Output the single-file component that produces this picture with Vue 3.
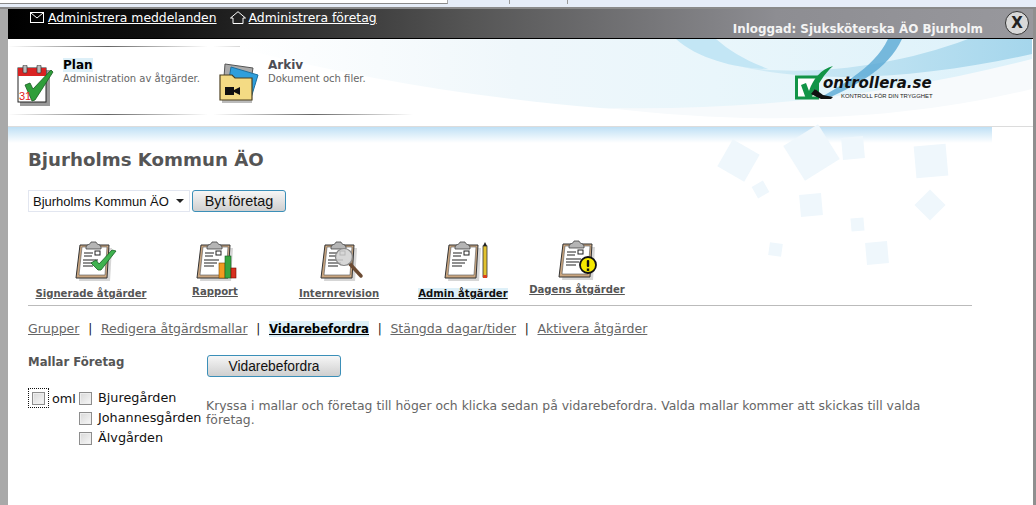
<template>
  <div class="chrome">
    <div class="chrometab"></div>
    <i class="tick first"></i>
    <i class="tick"></i>
  </div>
  <div class="window">
    <div class="topbar">
      <div class="toplinks">
        <svg class="ico" viewBox="0 0 14 11" width="14" height="11"><rect x="0.5" y="0.5" width="13" height="10" fill="none" stroke="#fff"/><path d="M1 1l6 5 6-5" fill="none" stroke="#fff"/></svg>
        <a class="toplink">Administrera meddelanden</a>
        <svg class="ico house" viewBox="0 0 16 13" width="16" height="13"><path d="M0.5 7L8 0.7 15.5 7H13v5.500H3V7z" fill="none" stroke="#fff"/></svg>
        <a class="toplink">Administrera företag</a>
      </div>
      <div class="logged">Inloggad: Sjuksköterska ÄO Bjurholm</div>
      <div class="close">X</div>
    </div>

    <header class="head">
      <svg class="swoosh" viewBox="0 0 1024 87" width="1024" height="87">
        <defs>
          <linearGradient id="sky" x1="232" x2="1024" y1="0" y2="0" gradientUnits="userSpaceOnUse">
            <stop offset="0" stop-color="#fff"/>
            <stop offset="0.35" stop-color="#eff7fb"/>
            <stop offset="0.6" stop-color="#e9f6fb"/>
            <stop offset="1" stop-color="#dcf1fa"/>
          </linearGradient>
          <linearGradient id="band" x1="700" x2="1024" y1="0" y2="0" gradientUnits="userSpaceOnUse">
            <stop offset="0" stop-color="#d9eff8"/>
            <stop offset="1" stop-color="#a5d6ec"/>
          </linearGradient>
        </defs>
        <path d="M232 9C330 35 460 58 592 69 700 76 860 62 1024 38V0H232z" fill="url(#sky)"/>
        <path d="M730 27C790 38 880 30 960 0H1024V15C930 36 820 48 730 27z" fill="url(#band)"/>
        <path d="M668 0H708C722 12 735 20 760 30 730 30 690 20 668 0z" fill="#c3e6f5"/>
        <path d="M880 0h14C880 30 850 48 790 72 830 48 866 30 880 0z" fill="#5aa9d4" opacity=".8"/>
        <path d="M600 69C760 72 900 52 1024 20V50C900 80 760 88 600 69z" fill="#f7fafc"/>
      </svg>
      <div class="headitem">
        <svg class="headicon" viewBox="0 0 38 42" width="38" height="42">
          <rect x="3" y="5" width="30" height="36" fill="#999"/>
          <rect x="1" y="3" width="28" height="34" fill="#fff" stroke="#222"/>
          <rect x="1" y="3" width="28" height="8" fill="#d92323"/>
          <rect x="6" y="0" width="4" height="8" rx="1" fill="#bbb" stroke="#333" stroke-width=".7"/>
          <rect x="20" y="0" width="4" height="8" rx="1" fill="#bbb" stroke="#333" stroke-width=".7"/>
          <path d="M8 20l5-2 3 6L34 5l2 2-18 28-3 1z" fill="#2f9e3a" stroke="#17591f" stroke-width=".8"/>
          <text x="2" y="35" class="calnum">31</text>
        </svg>
        <div class="headtext">
          <div class="headtitle current"><span>Plan</span></div>
          <div class="headsub">Administration av åtgärder.</div>
        </div>
      </div>
      <div class="headitem second">
        <svg class="headicon" viewBox="0 0 40 42" width="40" height="42">
          <path d="M6 2L34 6 30 30 4 28z" fill="#aaa" stroke="#555"/>
          <path d="M12 5L39 13 32 36 8 30z" fill="#2f9fdc" stroke="#1c6f9f"/>
          <path d="M3 41h30v-4H3z" fill="#bbb"/>
          <path d="M1 13h12l3 3h17v22H1z" fill="#f4db84" stroke="#4c4020" stroke-width="1.200"/>
          <rect x="6" y="25" width="9" height="8" fill="#111"/>
          <path d="M15 28l6-3v8l-6-3z" fill="#111"/>
        </svg>
        <div class="headtext">
          <div class="headtitle"><span>Arkiv</span></div>
          <div class="headsub">Dokument och filer.</div>
        </div>
      </div>
      <div class="brand">
        <svg class="brandmark" viewBox="0 0 40 36" width="40" height="36">
          <rect x="1.500" y="12" width="21" height="21" fill="#fff" stroke="#119447" stroke-width="3"/>
          <path d="M6 20l5-2 3 8C18 14 26 4 38 1 30 8 22 20 16 34h-5z" fill="#119447"/>
          <path d="M20 24l8 6 10 2-2 2H26l-10-5z" fill="#111"/>
        </svg>
        <div class="brandtext">
          <div class="brandname">ontrollera.se</div>
          <div class="brandsub">KONTROLL FÖR DIN TRYGGHET</div>
        </div>
      </div>
    </header>

    <main class="content">
      <div class="squares">
        <i v-for="(s, i) in squares" :key="i" class="square" :style="{ left: s[0] + 'px', top: s[1] + 'px', width: s[2] + 'px', height: s[2] + 'px', transform: 'rotate(' + s[3] + 'deg)' }"></i>
      </div>

      <h1 class="title">Bjurholms Kommun ÄO</h1>

      <div class="switch">
        <div class="select"><span>Bjurholms Kommun ÄO</span><b class="caret"></b></div>
        <button class="btn byt">Byt företag</button>
      </div>

      <nav class="tools">
        <a v-for="t in tools" :key="t.label" class="tool" :class="t.cls">
          <svg class="clip" viewBox="0 0 52 44" width="52" height="44">
            <path d="M8 8H37L35 41H4z" fill="#bbb" opacity=".6" transform="translate(3 1)"/>
            <path d="M8 6H37L35 39H4z" fill="#c9a57f" stroke="#333"/>
            <path d="M10 8H35L33 36H7z" fill="#fff" stroke="#555" stroke-width=".6"/>
            <path d="M14 8c0-3 5-2 5-5h5c0 3 5 2 5 5v2H14z" fill="#b5b5b5" stroke="#444" stroke-width=".8"/>
            <path d="M12 14h9M12 17h8M11 21h15M11 24h13M11 27h10" stroke="#222" stroke-width="1.100"/>
            <rect x="23" y="12" width="5" height="4" fill="none" stroke="#222"/>
            <path v-if="t.mark === 'check'" d="M19 24l5-3 3 4L40 11l4 1-15 19h-3z" fill="#3fb24f" stroke="#155f22" stroke-width=".8"/>
            <g v-if="t.mark === 'chart'">
              <rect x="26" y="24" width="6" height="15" fill="#f29a1f" stroke="#7a4a00" stroke-width=".6"/>
              <rect x="32" y="17" width="6" height="22" fill="#37a53f" stroke="#155f22" stroke-width=".6"/>
              <rect x="38" y="29" width="5" height="10" fill="#d8301f" stroke="#701000" stroke-width=".6"/>
            </g>
            <g v-if="t.mark === 'lens'">
              <path d="M33 25l11 12" stroke="#6b4a32" stroke-width="3.500" stroke-linecap="round"/>
              <circle cx="27" cy="18" r="8.500" fill="#d0d0d0" fill-opacity=".85" stroke="#888" stroke-width="1.200"/>
            </g>
            <g v-if="t.mark === 'pencil'">
              <rect x="42" y="7" width="4" height="31" fill="#e2c22f" stroke="#333" stroke-width=".8"/>
              <path d="M42 7l2-4 2 4z" fill="#222"/>
              <rect x="42" y="36" width="4" height="3" fill="#d8401f"/>
            </g>
            <g v-if="t.mark === 'warn'">
              <circle cx="33" cy="27" r="8" fill="#f5e900" stroke="#111" stroke-width="1.800"/>
              <rect x="31.800" y="22" width="2.400" height="7" rx="1" fill="#111"/>
              <rect x="31.800" y="30.500" width="2.400" height="2.400" fill="#111"/>
            </g>
          </svg>
          <span class="toollabel">{{ t.label }}</span>
        </a>
      </nav>

      <div class="tabs">
        <template v-for="(tab, i) in tabs" :key="tab">
          <span v-if="i" class="sep">|</span>
          <a class="tab" :class="{ active: tab === 'Vidarebefordra' }">{{ tab }}</a>
        </template>
      </div>

      <div class="formhead">
        <div class="formtitle">Mallar Företag</div>
        <button class="btn send">Vidarebefordra</button>
      </div>

      <div class="formbody">
        <div class="templates">
          <span class="focus"><i class="box"></i></span>
          <span class="oml">oml</span>
        </div>
        <ul class="companies">
          <li v-for="c in companies" :key="c"><i class="box"></i>{{ c }}</li>
        </ul>
        <p class="help">Kryssa i mallar och företag till höger och klicka sedan på vidarebefordra. Valda mallar kommer att skickas till valda företag.</p>
      </div>
    </main>
  </div>
</template>

<script setup>
const tools = [
  { label: 'Signerade åtgärder', mark: 'check', cls: 'signed' },
  { label: 'Rapport', mark: 'chart', cls: 'report' },
  { label: 'Internrevision', mark: 'lens', cls: 'audit' },
  { label: 'Admin åtgärder', mark: 'pencil', cls: 'admin' },
  { label: 'Dagens åtgärder', mark: 'warn', cls: 'today' }
]

const tabs = ['Grupper', 'Redigera åtgärdsmallar', 'Vidarebefordra', 'Stängda dagar/tider', 'Aktivera åtgärder']

const companies = ['Bjuregården', 'Johannesgården', 'Älvgården']

// left, top, size, rotation, relative to the content area
const squares = [
  [714.5, 17.5, 31, 30], [783, 5, 41, -32], [834, 10, 22, -5], [907, 18, 32, -5],
  [745.5, 55.5, 13, -30], [792, 67, 22, -5], [911, 67, 22, 45], [842.5, 90.5, 13, -5],
  [760.5, 115.5, 13, 8], [858, 115, 22, -5]
]
</script>

<style>
html, body {
  margin: 0;
  background: #fff;
}
</style>

<style scoped>
.chrome {
  display: flex;
  box-sizing: border-box;
  height: 9px;
  background: #e6edf8;
  border-bottom: 2px solid #8a8a8a;
}

.chrometab {
  box-sizing: border-box;
  width: 448px;
  height: 4px;
  background: #fff;
  border-bottom: 1px solid #8a8a8a;
  border-right: 1px solid #aaa;
}

.tick {
  display: block;
  width: 1px;
  height: 4px;
  margin-left: 57px;
  background: #999;
}

.tick.first {
  margin-left: 61px;
}

.window {
  box-sizing: border-box;
  height: 496px;
  overflow: hidden;
  background: #fff;
  border-left: 8px solid #a9a9a9;
  border-right: 3px solid #8f8f8f;
  font-family: "DejaVu Sans", Verdana, sans-serif;
}

.topbar {
  display: flex;
  height: 30px;
  background: linear-gradient(90deg, #000 0, #111 15%, #555 45%, #8d8d92 75%, #98989d 100%);
  border-bottom: 1px solid #000;
  color: #fff;
  box-sizing: border-box;
}

.toplinks {
  display: flex;
  align-items: center;
  height: 16px;
  padding-left: 22px;
}

.ico {
  margin-right: 4px;
}

.house {
  margin-left: 13px;
  margin-right: 3px;
}

.toplink {
  color: #fff;
  font-size: 12.400px;
  text-decoration: underline;
}

.logged {
  margin-left: auto;
  padding-top: 13px;
  font-size: 11.900px;
  font-weight: 700;
  color: #f4f4f4;
}

.close {
  box-sizing: border-box;
  width: 24px;
  height: 24px;
  margin: 2px 4px 0 22px;
  border: 1px solid #333;
  border-radius: 50%;
  background: #d8d8d8;
  color: #222;
  font-size: 15px;
  font-weight: 700;
  line-height: 22px;
  text-align: center;
}

.head {
  position: relative;
  display: flex;
  height: 88px;
  border-bottom: 1px solid #dcdcdc;
  overflow: hidden;
  box-sizing: border-box;
  background-image:
    linear-gradient(90deg, transparent, #666 50%, transparent),
    linear-gradient(90deg, transparent, #666 50%, transparent),
    linear-gradient(90deg, transparent, #666 50%, transparent),
    linear-gradient(90deg, transparent, #666 50%, transparent);
  background-size: 200px 1px;
  background-position: 0 7px, 205px 7px, 0 75px, 205px 75px;
  background-repeat: no-repeat;
}

.swoosh {
  position: absolute;
  left: 0;
  top: 0;
}

.headitem {
  position: relative;
  display: flex;
  width: 205px;
  padding: 19px 0 0 9px;
  box-sizing: border-box;
}

.headitem.second {
  padding-left: 6px;
}

.headicon {
  flex: none;
  margin-top: 7px;
}

.second .headicon {
  margin-top: 4px;
}

.calnum {
  font-family: "Liberation Sans", sans-serif;
  font-size: 11px;
  fill: #e02020;
}

.headtext {
  margin-left: 8px;
}

.second .headtext {
  margin-left: 9px;
}

.headtitle {
  font-size: 12px;
  font-weight: 700;
  color: #4d4d55;
  line-height: 15px;
}

.headtitle.current span {
  background: #def0f8;
  color: #000;
}

.headsub {
  font-size: 10px;
  color: #666;
  line-height: 12px;
  white-space: nowrap;
}

.brand {
  position: absolute;
  left: 787px;
  top: 26px;
  display: flex;
}

.brandtext {
  margin-left: -12px;
  padding-top: 9px;
}

.brandname {
  font-size: 15px;
  font-style: italic;
  font-weight: 700;
  line-height: 19px;
  color: #111;
}

.brandsub {
  margin-left: 18px;
  font-family: "Liberation Sans", sans-serif;
  font-size: 5.900px;
  line-height: 7px;
  color: #222;
  white-space: nowrap;
}

.content {
  position: relative;
  padding: 21px 52px 0 20px;
  height: 378px;
  box-sizing: border-box;
  background: linear-gradient(#bfe0f5, #fff 16px) no-repeat 0 0 / 984px 16px;
}

.squares {
  position: absolute;
  left: 0;
  top: 0;
}

.square {
  position: absolute;
  display: block;
  background: #eff7fc;
}

.title {
  position: relative;
  margin: 0;
  font-size: 18.200px;
  line-height: 24px;
  font-weight: 700;
  color: #555;
}

.switch {
  position: relative;
  display: flex;
  align-items: center;
  gap: 2px;
  margin-top: 18px;
}

.select {
  box-sizing: border-box;
  display: flex;
  align-items: center;
  justify-content: space-between;
  width: 162px;
  height: 22px;
  padding: 0 4px;
  background: #fff;
  border: 1px solid #e2e6f0;
  font-family: "Liberation Sans", sans-serif;
  font-size: 13px;
  color: #111;
  white-space: nowrap;
}

.caret {
  width: 0;
  height: 0;
  border: 4px solid transparent;
  border-top: 4px solid #222;
  border-bottom: 0;
  margin-right: 1px;
}

.btn {
  box-sizing: border-box;
  border: 1px solid #3b8fb8;
  border-radius: 3px;
  background: linear-gradient(#f6f6f6, #cfcfcf);
  font-family: "Liberation Sans", sans-serif;
  font-size: 13.800px;
  color: #111;
  padding: 0;
}

.byt {
  width: 94px;
  height: 22px;
  font-size: 14.400px;
  word-spacing: -1px;
}

.tools {
  position: relative;
  display: flex;
  align-items: flex-start;
  height: 67px;
  margin-top: 27px;
  border-bottom: 1px solid #bbb;
  width: 944px;
  box-sizing: border-box;
}

.tool {
  display: flex;
  flex-direction: column;
  align-items: center;
}

.clip {
  flex: none;
  margin-left: 8px;
}

.toollabel {
  font-size: 10.100px;
  font-weight: 700;
  color: #555;
  text-decoration: underline;
  white-space: nowrap;
  line-height: 12px;
  margin-top: 5px;
}

.signed { margin-left: 8px; width: 110px; }
.signed .clip { margin-left: 13px; }
.report { margin-left: 46px; width: 46px; }
.report .toollabel { margin-top: 3px; }
.audit { margin-left: 60px; width: 82px; }
.admin { margin-left: 38px; width: 90px; }
.today { margin-left: 21px; width: 96px; margin-top: -1px; }
.today .toollabel { margin-top: 2px; }

.admin .toollabel {
  color: #111;
  background: #def0f8;
}

.tabs {
  position: relative;
  display: flex;
  align-items: center;
  margin-top: 15px;
  font-size: 12.500px;
  line-height: 16px;
  color: #111;
}

.tab {
  color: #666;
  text-decoration: underline;
}

.tab.active {
  color: #000;
  font-size: 11.700px;
  font-weight: 700;
  background: #def0f8;
}

.sep {
  margin: 0 8.700px;
  font-size: 12px;
}

.formhead {
  position: relative;
  display: flex;
  align-items: flex-start;
  margin-top: 18px;
}

.formtitle {
  width: 179px;
  font-size: 11.700px;
  font-weight: 700;
  color: #555;
  line-height: 14px;
}

.send {
  width: 134px;
  height: 22px;
}

.formbody {
  position: relative;
  display: flex;
  align-items: flex-start;
  margin-top: 11px;
  font-size: 12.800px;
  color: #111;
}

.box {
  display: inline-block;
  flex: none;
  box-sizing: border-box;
  width: 13px;
  height: 13px;
  background: linear-gradient(135deg, #d8d8d8, #f8f8f8);
  border: 1px solid #8d8d8d;
  box-shadow: inset 0 0 0 1px #eee;
}

.templates {
  display: flex;
  align-items: center;
  height: 20px;
}

.focus {
  display: flex;
  align-items: center;
  justify-content: center;
  box-sizing: border-box;
  width: 21px;
  height: 20px;
  border: 1px dotted #111;
}

.oml {
  margin-left: 3px;
  width: 27px;
}

.companies {
  flex: none;
  width: 126px;
  list-style: none;
  margin: 0;
  padding: 0;
}

.companies li {
  display: flex;
  align-items: center;
  gap: 6px;
  height: 20px;
  line-height: 20px;
  white-space: nowrap;
}

.help {
  flex: none;
  width: 740px;
  margin: 11px 0 0 1px;
  color: #666;
  font-size: 12.400px;
  line-height: 14px;
}
</style>
